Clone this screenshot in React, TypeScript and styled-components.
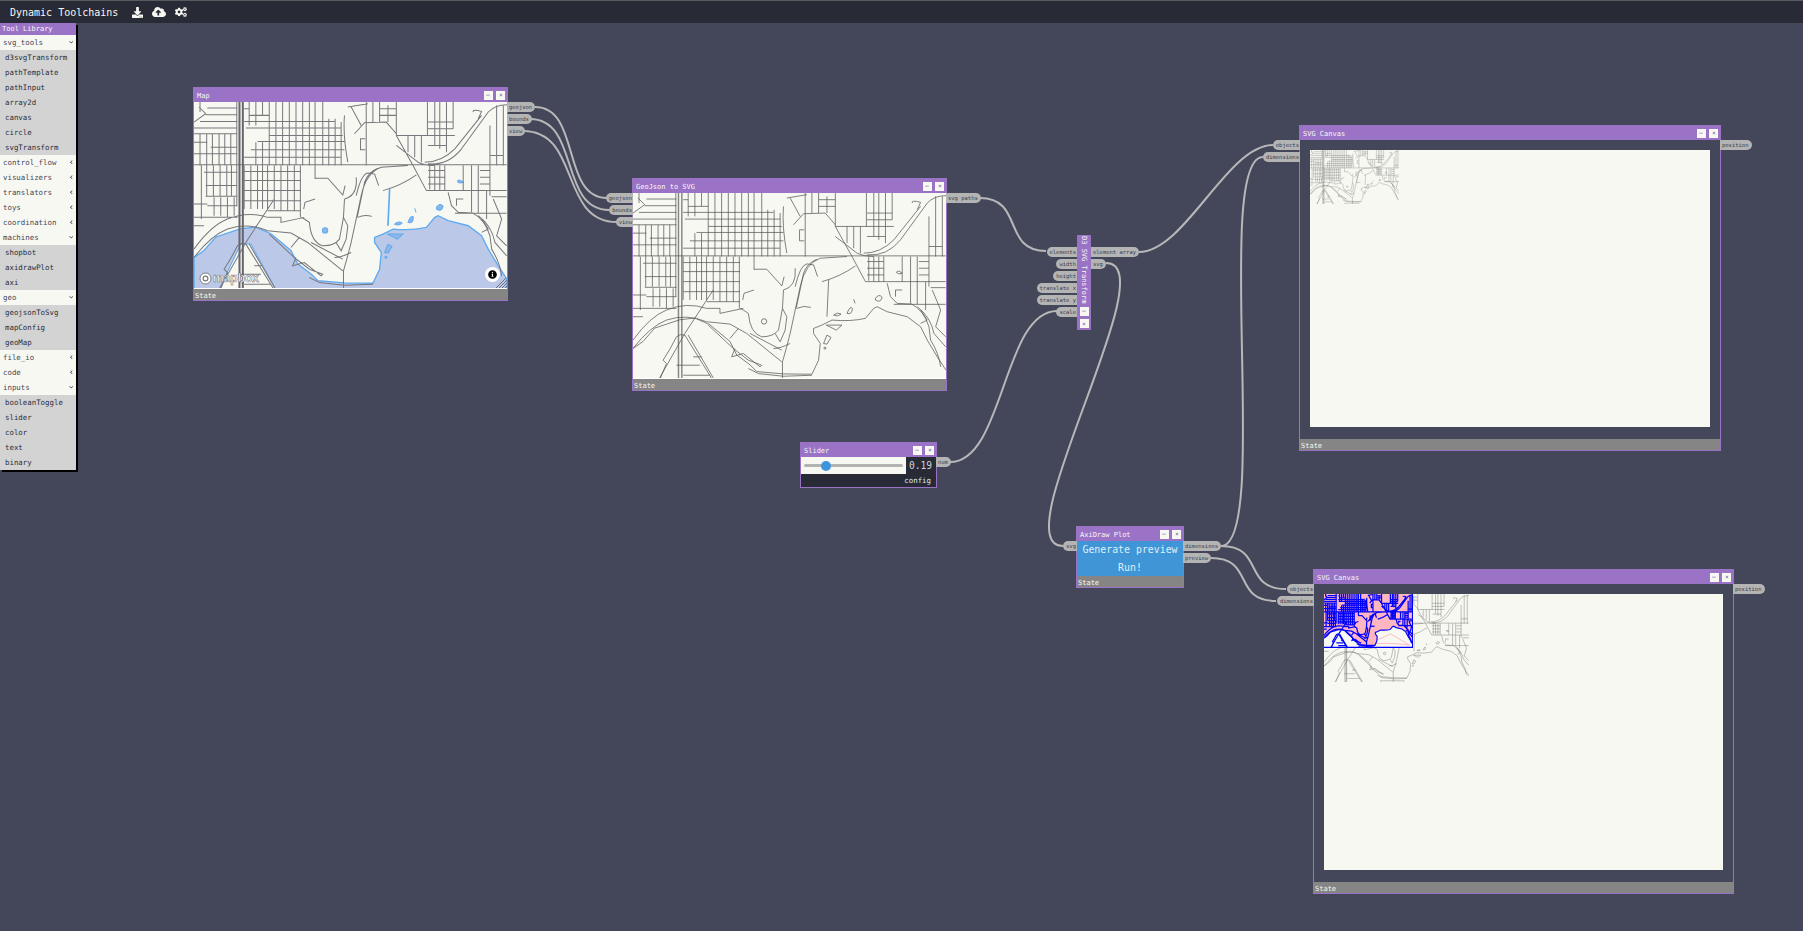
import React from 'react'
import styled, { createGlobalStyle } from 'styled-components'
import {
  FaChevronDown,
  FaChevronLeft,
  FaCloudUploadAlt,
  FaCogs,
  FaDownload,
  FaInfoCircle,
  FaMinus,
  FaTimes,
} from 'react-icons/fa'

const PURPLE = '#9a73c6'
const DARK = '#282a36'
const SLATE = '#44475a'
const CREAM = '#f8f8f2'
const MONO = '"DejaVu Sans Mono", "Liberation Mono", monospace'

const GlobalStyle = createGlobalStyle`
  html, body {
    margin: 0;
    height: 100%;
    overflow: hidden;
    background: ${SLATE};
  }
  * { box-sizing: border-box; }
`

const Page = styled.div`
  position: relative;
  width: 100vw;
  height: 100vh;
  font-family: ${MONO};
  background: ${SLATE};
`

const TopBar = styled.header`
  display: flex;
  align-items: center;
  gap: 9px;
  height: 23px;
  padding-left: 10px;
  background: ${DARK};
  border-top: 1px solid #5a5a5f;
  color: ${CREAM};
`

const AppTitle = styled.h1`
  margin: 0 5px 0 0;
  font-size: 10px;
  font-weight: 400;
`

const BarIcon = styled.span`
  display: flex;
  font-size: ${(p: { $size: number }) => p.$size}px;
`

/* tool library */
const Library = styled.aside`
  position: absolute;
  z-index: 3;
  top: 23px;
  left: 0;
  width: 76px;
  box-shadow: 2px 2px 0 #000;
`

const LibraryTitle = styled.div`
  height: 12px;
  padding-left: 2px;
  font-size: 7px;
  line-height: 12px;
  background: ${PURPLE};
  color: ${CREAM};
`

const Category = styled.div`
  display: flex;
  align-items: center;
  justify-content: space-between;
  height: 15px;
  padding: 0 3px;
  font-size: 7.4px;
  background: ${CREAM};
  color: ${SLATE};
  svg { font-size: 4.5px; }
`

const Tool = styled.div`
  height: 15px;
  padding-left: 5px;
  font-size: 7.4px;
  line-height: 15px;
  background: #d3d3d3;
  color: #2c2e3a;
`

const library: [string, string[] | null][] = [
  ['svg_tools', ['d3svgTransform', 'pathTemplate', 'pathInput', 'array2d', 'canvas', 'circle', 'svgTransform']],
  ['control_flow', null],
  ['visualizers', null],
  ['translators', null],
  ['toys', null],
  ['coordination', null],
  ['machines', ['shopbot', 'axidrawPlot', 'axi']],
  ['geo', ['geojsonToSvg', 'mapConfig', 'geoMap']],
  ['file_io', null],
  ['code', null],
  ['inputs', ['booleanToggle', 'slider', 'color', 'text', 'binary']],
]

/* nodes */
const Wires = styled.svg`
  position: absolute;
  inset: 0;
  fill: none;
  stroke: #b8b8b8;
  stroke-width: 2;
`

type NodeBox = { $x: number; $y: number; $w: number; $h: number }

const Node = styled.section<NodeBox>`
  position: absolute;
  z-index: 1;
  left: ${(p) => p.$x}px;
  top: ${(p) => p.$y}px;
  width: ${(p) => p.$w}px;
  height: ${(p) => p.$h}px;
  display: flex;
  flex-direction: column;
  border: 1px solid ${PURPLE};
  background: ${SLATE};
`

const TitleBar = styled.div`
  flex: none;
  display: flex;
  align-items: center;
  justify-content: space-between;
  height: 14px;
  padding: 0 2px 0 3px;
  font-size: 7px;
  background: ${PURPLE};
  color: ${CREAM};
`

const TitleText = styled.span`
  padding-top: 2px;
`

const WinButtons = styled.div<{ $vertical?: boolean }>`
  display: flex;
  flex-direction: ${(p) => (p.$vertical ? 'column' : 'row')};
  gap: 3.5px;
`

const WinButton = styled.span`
  display: flex;
  align-items: center;
  justify-content: center;
  width: 9px;
  height: 9px;
  font-size: 4px;
  background: ${CREAM};
  color: #8f7fa8;
`

const StateBar = styled.div`
  flex: none;
  height: 11px;
  padding: 2px 0 0 1px;
  font-size: 7px;
  line-height: 10px;
  background: #858585;
  color: ${CREAM};
`

const PortColumn = styled.div<{ $side: 'in' | 'out'; $top?: number }>`
  position: absolute;
  top: ${(p) => p.$top ?? 14}px;
  ${(p) => (p.$side === 'in' ? 'right: 100%;' : 'left: 100%;')}
  display: flex;
  flex-direction: column;
  align-items: ${(p) => (p.$side === 'in' ? 'flex-end' : 'flex-start')};
  gap: 2px;
`

const Port = styled.div<{ $side: 'in' | 'out' }>`
  height: 10px;
  padding: ${(p) => (p.$side === 'in' ? '0 1px 0 3px' : '0 3px 0 2px')};
  border-radius: ${(p) => (p.$side === 'in' ? '5px 0 0 5px' : '0 5px 5px 0')};
  font-size: 5.5px;
  line-height: 10px;
  white-space: nowrap;
  background: #b4b4b4;
  color: #3e3e4a;
`

const Ports = ({ side, names, top }: { side: 'in' | 'out'; names: string[]; top?: number }) => (
  <PortColumn $side={side} $top={top}>
    {names.map((n) => (
      <Port key={n} $side={side}>
        {n}
      </Port>
    ))}
  </PortColumn>
)

const Buttons = ({ vertical }: { vertical?: boolean }) => (
  <WinButtons $vertical={vertical}>
    <WinButton>
      <FaMinus />
    </WinButton>
    <WinButton>
      <FaTimes />
    </WinButton>
  </WinButtons>
)

/* map layers, all in the same 936x570 drawing space */
const hLines: [number, number, number][] = [
  [18, 40, 130], [38, 35, 130], [58, 18, 130], [78, 0, 130], [95, 0, 130], [135, 50, 130], [155, 0, 130],
  [188, 0, 935], [210, 30, 130], [250, 35, 130], [282, 35, 130], [305, 0, 40], [345, 0, 130], [370, 0, 30],
  [40, 165, 225], [20, 150, 165], [58, 150, 420], [78, 155, 440], [100, 225, 445], [118, 190, 450],
  [143, 170, 450], [165, 150, 440], [208, 150, 320],
  [235, 150, 320], [265, 150, 320], [295, 150, 320], [325, 220, 320],
  [20, 555, 605], [40, 555, 605], [100, 605, 780], [205, 700, 750], [225, 700, 750], [245, 700, 750],
  [265, 695, 935], [205, 855, 885], [225, 855, 885], [245, 855, 885], [283, 890, 935], [333, 780, 935],
  [120, 0, 40], [310, 40, 130], [60, 700, 775], [80, 700, 775], [130, 700, 755], [160, 885, 925],
]

const vLines: [number, number, number][] = [
  [18, 95, 190], [38, 95, 280], [55, 95, 190], [75, 95, 190], [92, 95, 190], [110, 95, 190], [128, 0, 310],
  [22, 190, 350], [58, 190, 280], [78, 190, 280], [98, 190, 280], [112, 190, 280],
  [18, 0, 30], [60, 285, 340], [80, 285, 340], [100, 285, 345], [120, 285, 340],
  [150, 190, 320], [170, 190, 320], [190, 190, 320], [205, 190, 320], [220, 190, 320], [240, 190, 320],
  [260, 190, 325], [280, 190, 325], [300, 190, 325], [318, 190, 345],
  [165, 0, 70], [185, 0, 70], [185, 120, 190], [205, 0, 40], [205, 120, 190], [225, 0, 190], [245, 0, 190],
  [265, 0, 190], [285, 0, 190], [305, 0, 190], [325, 0, 190], [345, 0, 190], [362, 0, 230], [385, 0, 190],
  [403, 50, 190], [422, 50, 190], [440, 60, 190],
  [515, 0, 190], [535, 0, 60], [555, 0, 60], [580, 10, 60], [605, 0, 100], [698, 0, 100], [720, 0, 130],
  [735, 0, 140], [755, 0, 150], [775, 0, 80], [885, 70, 190], [905, 10, 190], [925, 10, 190],
  [705, 190, 262], [720, 190, 265], [735, 190, 265], [750, 190, 265], [830, 190, 330], [850, 190, 333],
  [875, 265, 350], [885, 190, 280], [805, 190, 265], [447, 505, 570],
  [640, 100, 150], [660, 100, 165], [680, 100, 180],
]

const curves = [
  'M700 185Q760 190 800 140L880 30Q900 8 936 8',
  'M690 180Q740 180 780 140L860 40',
  'M605 130L670 180Q690 190 720 190',
  'M605 100L655 190L695 265',
  'M835 30Q832 20 860 28L850 50',
  'M447 505Q460 460 470 420L500 280Q515 210 560 195L640 190',
  'M488 345L510 240Q520 210 550 198',
  'M565 265Q620 250 665 218',
  'M485 280Q500 215 520 212L540 215L552 250',
  'M480 95L510 62L575 60L605 95',
  'M450 40Q445 100 460 180M470 15L500 70M460 15L520 5M0 60L35 35L15 15',
  'M512 110H498V143H512',
  'M362 228L400 228L445 278L452 250',
  'M450 290L447 345L435 410Q420 430 385 430Q350 420 345 360L330 350L320 345',
  'M362 290L332 300L328 320',
  'M447 345L460 370L455 410L440 445L425 420',
  'M450 290Q490 280 485 225M490 345Q510 335 532 342',
  'M0 440Q50 370 100 350Q160 325 220 345L260 345L260 360L330 345',
  'M0 465Q50 400 100 380Q160 360 220 385L290 392L340 420L445 505',
  'M225 395L300 465L345 500L385 515L380 520L330 480L295 490L305 465',
  'M290 435L315 405M350 420L445 470M420 465Q440 465 470 450',
  'M345 525L375 540L450 548L535 545',
  'M365 570V560H515V570',
  'M70 570L155 420L240 290',
  'M155 425L245 570M165 425L250 570M130 430Q110 470 90 500L100 510L75 570M130 430Q140 420 155 425',
  'M130 515H200M150 545H230M180 490H205',
  'M830 330Q870 350 885 400L890 440Q915 480 920 520',
  'M850 340Q890 370 900 420L935 460',
  'M895 290L920 350L905 400L935 430M860 350L880 380L860 390',
  'M760 270L770 310L790 330L830 332M785 310V290H805',
]

const roadPath =
  hLines.map(([y, a, b]) => `M${a} ${y}H${b}`).join('') +
  vLines.map(([x, a, b]) => `M${x} ${a}V${b}`).join('') +
  curves.join('')

const coastPath =
  'M0 465L30 444L65 404L140 379L185 374L230 394L290 444L310 484L350 514L370 534L450 541L535 542L555 500L560 450L540 420L540 405L565 395L595 380Q650 385 695 375L720 345L730 340L760 355L820 370L860 400L880 440L910 490L936 530'
const riverPath = 'M580 370L585 260'
const isletPaths = [
  'M600 365Q612 355 622 362Q612 372 600 365Z',
  'M640 360Q650 335 656 345Q655 365 640 360Z',
  'M660 318L664 330',
  'M578 395H625L608 410Z',
  'M570 450L580 425L592 432L580 452Z',
  'M571 464a3 3 0 1 0 6 0a3 3 0 1 0-6 0Z',
  'M725 315Q735 300 745 312Q740 330 725 320Z',
  'M788 238Q790 228 805 240Q795 245 788 238Z',
  'M384 384a8 8 0 1 0 16 0a8 8 0 1 0-16 0Z',
]
const triangleIsland = 'M140 425H170L250 570H70Z'
const waterPath = `${coastPath}V570H0Z`

const MapSvg = styled.svg<{ $w?: number; $h?: number }>`
  display: block;
  width: ${(p) => (p.$w ? `${p.$w}px` : '100%')};
  height: ${(p) => (p.$h ? `${p.$h}px` : '100%')};
  fill: none;
`

const LineMap = ({ stroke, width, w, h }: { stroke: string; width: number; w?: number; h?: number }) => (
  <MapSvg viewBox="0 0 936 570" preserveAspectRatio="xMinYMin slice" $w={w} $h={h}>
    <path d={roadPath} stroke={stroke} strokeWidth={width} />
    <path d={coastPath} stroke={stroke} strokeWidth={width} />
    <path d={riverPath} stroke={stroke} strokeWidth={width} />
    <path d="M136 0V570M146 0V570" stroke={stroke} strokeWidth={width * 2} opacity={0.7} />
    {isletPaths.map((d) => (
      <path key={d} d={d} stroke={stroke} strokeWidth={width} />
    ))}
  </MapSvg>
)

const TileMap = () => (
  <MapSvg viewBox="0 0 936 570" preserveAspectRatio="xMinYMin slice">
    <path d={waterPath} fill="#bcc8e7" stroke="#5fabf0" strokeWidth={4} />
    <path d={triangleIsland} fill={CREAM} stroke="#5fabf0" strokeWidth={3} />
    <path d="M370 570V561H520V570Z" fill={CREAM} stroke="#5fabf0" strokeWidth={3} />
    <path d={riverPath} stroke="#5fabf0" strokeWidth={5} />
    {isletPaths.map((d) => (
      <path key={d} d={d} fill="#8fb6ea" stroke="#5fabf0" strokeWidth={3} />
    ))}
    <path d={roadPath} stroke="#77777c" strokeWidth={3} />
    <path d="M136 0V570M146 0V570" stroke="#66666c" strokeWidth={6} />
  </MapSvg>
)

const PlotMap = () => (
  <MapSvg viewBox="0 0 936 570" preserveAspectRatio="none" $w={89} $h={54}>
    <rect width="936" height="570" fill="#ffb6c1" />
    <path d={waterPath} fill={CREAM} />
    <path d="M400 530Q600 480 700 420L900 540Q650 500 400 540" stroke="#ffb6c1" strokeWidth={10} />
    <path d={roadPath} stroke="#0000ff" strokeWidth={13} />
    <path d={coastPath} stroke="#0000ff" strokeWidth={12} />
    <path d="M0 565H932V0" stroke="#0000ff" strokeWidth={14} />
  </MapSvg>
)

const MapFrame = styled.div`
  position: relative;
  flex: 1;
  min-height: 0;
  overflow: hidden;
  background: ${CREAM};
  border-bottom: 1px solid #fff;
`

const Attribution = styled.div`
  position: absolute;
  left: 5px;
  bottom: 3px;
  display: flex;
  align-items: center;
  gap: 1px;
  font-family: "Liberation Sans", Arial, sans-serif;
  font-size: 12px;
  font-weight: 700;
  color: #fff;
  -webkit-text-stroke: 0.5px #6a6c72;
`

const LogoMark = styled.svg`
  width: 13px;
  height: 13px;
`

const InfoBadge = styled.span`
  position: absolute;
  right: 7px;
  bottom: 6px;
  display: flex;
  align-items: center;
  justify-content: center;
  width: 15px;
  height: 15px;
  border-radius: 50%;
  font-size: 9px;
  background: #fff;
  color: #000;
`

const Hatch = styled.svg`
  position: absolute;
  right: 0;
  bottom: 0;
  width: 11px;
  height: 10px;
`

const CanvasBody = styled.div<{ $bottom: number }>`
  flex: 1;
  min-height: 0;
  padding: 10px 10px ${(p) => p.$bottom}px 10px;
`

const Sheet = styled.div`
  position: relative;
  height: 100%;
  background: ${CREAM};
`

const Overlay = styled.div`
  position: absolute;
  top: 0;
  left: 0;
`

const SliderRow = styled.div`
  flex: none;
  display: flex;
  height: 17px;
  background: ${DARK};
`

const SliderWell = styled.div`
  flex: 1;
  display: flex;
  align-items: center;
  padding: 0 3px;
  background: ${CREAM};
`

const SliderInput = styled.input`
  appearance: none;
  display: block;
  width: 100%;
  height: 10px;
  margin: 0;
  background: transparent;
  &::-webkit-slider-runnable-track {
    height: 3px;
    background: #b3b3b3;
    border-radius: 2px;
  }
  &::-webkit-slider-thumb {
    appearance: none;
    width: 10px;
    height: 10px;
    margin-top: -3.5px;
    border-radius: 50%;
    background: #3f95dc;
  }
`

const SliderValue = styled.div`
  width: 30px;
  padding-left: 3px;
  font-size: 9.6px;
  line-height: 17px;
  color: #c9d3de;
`

const ConfigRow = styled.div`
  flex: 1;
  padding-right: 5px;
  font-size: 7.4px;
  line-height: 13px;
  text-align: right;
  background: ${DARK};
  color: #dcecf5;
`

const PlotActions = styled.div`
  flex: 1;
  display: flex;
  flex-direction: column;
  background: #4095d6;
`

const PlotAction = styled.button`
  flex: 1;
  padding: 0;
  border: 0;
  font-family: ${MONO};
  font-size: 9.9px;
  background: transparent;
  color: #dff0fb;
`

const VerticalNode = styled(Node)`
  align-items: center;
  justify-content: space-between;
  padding: 1px 0 2px;
  border: 0;
  background: ${PURPLE};
`

const VerticalTitle = styled.span`
  writing-mode: vertical-rl;
  font-size: 7px;
  line-height: 14px;
  color: ${CREAM};
`

type Wire = [number, number, number, number, number]

const wires: Wire[] = [
  [535, 107, 607, 198, 46],
  [530, 119, 609, 210, 50],
  [523, 131, 617, 222, 58],
  [980, 198, 1046, 251, 44],
  [1139, 252, 1273, 145, 46],
  [1106, 263, 1063, 546, 62],
  [950, 462, 1057, 311, 54],
  [1221, 546, 1263, 157, 50],
  [1221, 546, 1286, 589, 44],
  [1211, 558, 1276, 601, 44],
]

const App = () => (
  <Page>
    <GlobalStyle />
    <TopBar>
      <AppTitle>Dynamic Toolchains</AppTitle>
      <BarIcon $size={11}>
        <FaDownload />
      </BarIcon>
      <BarIcon $size={14}>
        <FaCloudUploadAlt />
      </BarIcon>
      <BarIcon $size={12}>
        <FaCogs />
      </BarIcon>
    </TopBar>

    <Library>
      <LibraryTitle>Tool Library</LibraryTitle>
      {library.map(([name, tools]) => (
        <React.Fragment key={name}>
          <Category>
            {name}
            {tools ? <FaChevronDown /> : <FaChevronLeft />}
          </Category>
          {tools?.map((t) => <Tool key={t}>{t}</Tool>)}
        </React.Fragment>
      ))}
    </Library>

    <Wires width="1803" height="931">
      {wires.map(([x1, y1, x2, y2, k]) => (
        <path key={`${x1}-${y1}-${x2}`} d={`M${x1} ${y1}C${x1 + k} ${y1} ${x2 - k} ${y2} ${x2} ${y2}`} />
      ))}
    </Wires>

    <Node $x={193} $y={87} $w={315} $h={214}>
      <TitleBar>
        <TitleText>Map</TitleText>
        <Buttons />
      </TitleBar>
      <MapFrame>
        <TileMap />
        <Attribution>
          <LogoMark viewBox="0 0 13 13">
            <circle cx="6.5" cy="6.5" r="5.5" fill="#fff" stroke="#77797f" strokeWidth="1" />
            <circle cx="6.5" cy="6.5" r="2.4" fill="none" stroke="#77797f" strokeWidth="1.2" />
          </LogoMark>
          mapbox
        </Attribution>
        <InfoBadge>
          <FaInfoCircle />
        </InfoBadge>
        <Hatch viewBox="0 0 11 10">
          <path d="M0 10L10 0M3 10L11 2M6 10L11 5M9 10L11 8" stroke="#55575f" strokeWidth="0.8" />
        </Hatch>
      </MapFrame>
      <StateBar>State</StateBar>
      <Ports side="out" names={['geojson', 'bounds', 'view']} />
    </Node>

    <Node $x={632} $y={178} $w={315} $h={213}>
      <TitleBar>
        <TitleText>GeoJson to SVG</TitleText>
        <Buttons />
      </TitleBar>
      <MapFrame>
        <LineMap stroke="#555555" width={2.2} />
      </MapFrame>
      <StateBar>State</StateBar>
      <Ports side="in" names={['geojson', 'bounds', 'view']} />
      <Ports side="out" names={['svg paths']} />
    </Node>

    <VerticalNode $x={1077} $y={235} $w={14} $h={95}>
      <VerticalTitle>D3 SVG Transform</VerticalTitle>
      <Buttons vertical />
      <Ports side="in" top={12} names={['elements', 'width', 'height', 'translate x', 'translate y', 'scale']} />
      <Ports side="out" top={12} names={['element array', 'svg']} />
    </VerticalNode>

    <Node $x={800} $y={442} $w={137} $h={46}>
      <TitleBar>
        <TitleText>Slider</TitleText>
        <Buttons />
      </TitleBar>
      <SliderRow>
        <SliderWell>
          <SliderInput type="range" min={0} max={1} step={0.01} defaultValue={0.19} />
        </SliderWell>
        <SliderValue>0.19</SliderValue>
      </SliderRow>
      <ConfigRow>config</ConfigRow>
      <Ports side="out" names={['num']} />
    </Node>

    <Node $x={1076} $y={526} $w={108} $h={62}>
      <TitleBar>
        <TitleText>AxiDraw Plot</TitleText>
        <Buttons />
      </TitleBar>
      <PlotActions>
        <PlotAction>Generate preview</PlotAction>
        <PlotAction>Run!</PlotAction>
      </PlotActions>
      <StateBar>State</StateBar>
      <Ports side="in" names={['svg']} />
      <Ports side="out" names={['dimensions', 'preview']} />
    </Node>

    <Node $x={1299} $y={125} $w={422} $h={326}>
      <TitleBar>
        <TitleText>SVG Canvas</TitleText>
        <Buttons />
      </TitleBar>
      <CanvasBody $bottom={12}>
        <Sheet>
          <LineMap stroke="#4c4c4c" width={2.6} w={89} h={54} />
        </Sheet>
      </CanvasBody>
      <StateBar>State</StateBar>
      <Ports side="in" names={['objects', 'dimensions']} />
      <Ports side="out" names={['position']} />
    </Node>

    <Node $x={1313} $y={569} $w={421} $h={325}>
      <TitleBar>
        <TitleText>SVG Canvas</TitleText>
        <Buttons />
      </TitleBar>
      <CanvasBody $bottom={12}>
        <Sheet>
          <LineMap stroke="#4c4c4c" width={2.2} w={145} h={88} />
          <Overlay>
            <PlotMap />
          </Overlay>
        </Sheet>
      </CanvasBody>
      <StateBar>State</StateBar>
      <Ports side="in" names={['objects', 'dimensions']} />
      <Ports side="out" names={['position']} />
    </Node>
  </Page>
)

export default App
